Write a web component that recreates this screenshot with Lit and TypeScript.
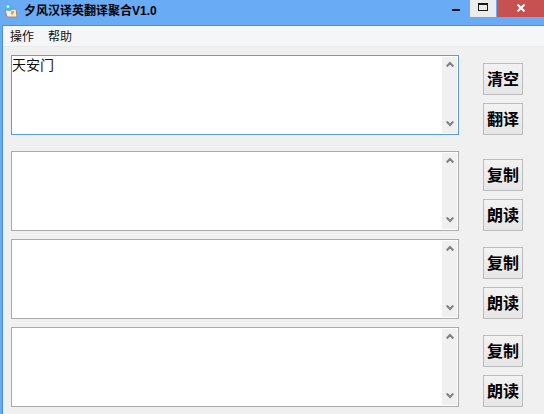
import { LitElement, html, css, svg } from "lit";
import { customElement } from "lit/decorators.js";

const FONT = css`"Liberation Sans", "Noto Sans CJK SC", sans-serif`;

@customElement("text-pane")
class TextPane extends LitElement {
  static properties = { text: {}, focused: { type: Boolean } };
  text = "";
  focused = false;
  static styles = css`
    :host { display: block; width: 448px; height: 80px; box-sizing: border-box; border: 1px solid #ababab; background: #fff; }
    :host([focused]) { border-color: #569de5; }
    .inner { display: flex; height: 100%; }
    .text { flex: 1; font: 14px/16px ${FONT}; color: #111; padding: 1px 0 0 0; white-space: pre; }
    .bar { width: 15px; margin: 1px 1px 1px 0; background: #f0f0f0; display: flex; flex-direction: column; justify-content: space-between; align-items: center; padding: 1px 0; box-sizing: border-box; }
    svg { display: block; width: 8px; height: 6px; margin: 3px 0; }
    svg.down { margin-bottom: 5px; }
    path { fill: none; stroke: #7f7f7f; stroke-width: 2; }
  `;
  render() {
    return html`<div class="inner">
      <div class="text">${this.text}</div>
      <div class="bar">
        <svg viewBox="0 0 8 6">${svg`<path d="M0.7 5.5 L4 2 L7.3 5.5"/>`}</svg>
        <svg class="down" viewBox="0 0 8 6">${svg`<path d="M0.7 0.5 L4 4 L7.3 0.5"/>`}</svg>
      </div>
    </div>`;
  }
}

@customElement("app-root")
class AppRoot extends LitElement {
  static styles = css`
    :host { display: block; width: 544px; height: 414px; overflow: hidden; background: #6aabf6; font-family: ${FONT}; }
    .titlebar { height: 25px; display: flex; align-items: flex-start; }
    .icon { width: 15px; height: 15px; margin: 3px 0 0 3px; display: block; }
    .title { margin: 3px 0 0 6px; font: bold 12px/16px ${FONT}; color: #000; flex: 1; white-space: nowrap; }
    .ctl { display: flex; height: 17px; }
    .min { width: 27px; box-sizing: border-box; padding-left: 9px; }
    .min i { display: block; width: 8px; height: 2px; margin-top: 9px; background: #1a1a1a; }
    .max { width: 26px; background: #ececec; display: flex; justify-content: center; }
    .max i { display: block; width: 8px; height: 5px; margin-top: 3px; border: 1px solid #1a1a1a; border-top-width: 2px; box-sizing: content-box; }
    .close { width: 47px; margin-left: 1px; background: #c75050; display: flex; justify-content: center; padding-top: 4px; box-sizing: border-box; }
    .close svg { width: 8px; height: 8px; display: block; }
    .close path { stroke: #fff; stroke-width: 2; fill: none; }
    .window { height: 389px; margin-left: 2px; border-top: 1px solid #4a8fdc; border-left: 1px solid #4a8fdc; background: #f0f0f0; box-sizing: border-box; }
    .menu { height: 20px; background: #f5f6f7; border-bottom: 1px solid #e8e9ea; display: flex; gap: 14px; padding-left: 7px; font: 12px/22px ${FONT}; color: #111; box-sizing: content-box; }
    .body { padding: 8px 0 0 8px; display: flex; flex-direction: column; gap: 8px; }
    .row { display: flex; gap: 24px; }
    .row.first { margin-bottom: 8px; }
    .btns { display: flex; flex-direction: column; gap: 8px; padding-top: 8px; }
    .btn { width: 40px; height: 32px; box-sizing: border-box; border: 1px solid #bcbcbc; background: linear-gradient(#f2f2f2, #e6e6e6); font: bold 16px/30px ${FONT}; color: #000; text-align: center; white-space: nowrap; padding-top: 1px; }
  `;
  private row(a: string, b: string, text = "", focused = false, first = false) {
    return html`<div class="row ${first ? "first" : ""}">
      <text-pane .text=${text} ?focused=${focused}></text-pane>
      <div class="btns"><div class="btn">${a}</div><div class="btn">${b}</div></div>
    </div>`;
  }
  render() {
    return html`
      <div class="titlebar">
        <svg class="icon" viewBox="0 0 15 15">
          <path d="M2 7 L13 6 L14 14 L4 14 Z" fill="#f6eedd" stroke="#a08a78" stroke-width="1"/>
          <circle cx="6" cy="4.5" r="3.5" fill="#45b4ec"/>
          <circle cx="5" cy="3.5" r="1.5" fill="#dcf4fc"/>
          <path d="M8 8 h3 v2 l-2 2 l-1 -1 z" fill="#f4a020"/>
        </svg>
        <div class="title">夕风汉译英翻译聚合V1.0</div>
        <div class="ctl">
          <div class="min"><i></i></div>
          <div class="max"><i></i></div>
          <div class="close"><svg viewBox="0 0 8 8"><path d="M0.5 0.5 L7.5 7.5 M7.5 0.5 L0.5 7.5"/></svg></div>
        </div>
      </div>
      <div class="window">
        <div class="menu"><span>操作</span><span>帮助</span></div>
        <div class="body">
          ${this.row("清空", "翻译", "天安门", true, true)}
          ${this.row("复制", "朗读")}
          ${this.row("复制", "朗读")}
          ${this.row("复制", "朗读")}
        </div>
      </div>
    `;
  }
}
